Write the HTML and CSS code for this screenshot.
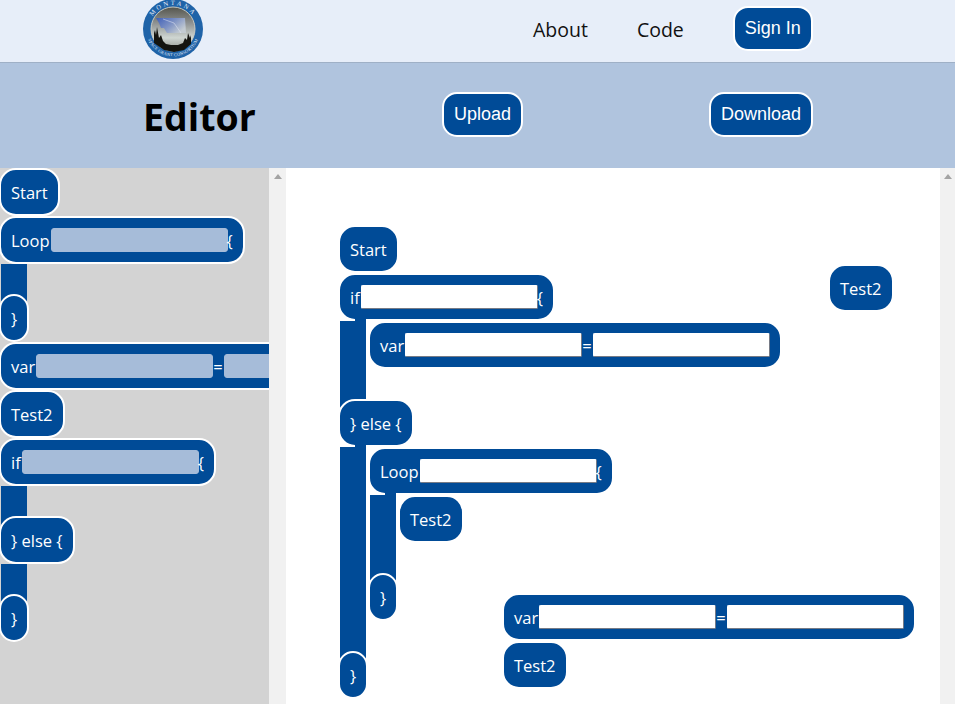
FILE: index.html
```html
<!DOCTYPE html>
<html lang="en">
<head>
    <meta charset="UTF-8">
    <meta name="viewport" content="width=device-width, initial-scale=1.0">
    <title>Editor</title>
    <link rel="stylesheet" href="styles.css">
</head>
<body>

    <nav class="navbar">
        <svg class="logo" viewBox="0 0 60 60" aria-label="Montana Space Grant Consortium">
            <defs>
                <path id="logo-top" d="M6 30a24 24 0 0 1 48 0"/>
                <path id="logo-bottom" d="M2.800 30a27.200 27.200 0 0 0 54.400 0"/>
                <linearGradient id="logo-sky" x1="0" y1="0" x2="0" y2="1">
                    <stop offset="0" stop-color="#55554c"/>
                    <stop offset="0.35" stop-color="#8b8f8f"/>
                    <stop offset="0.7" stop-color="#cfd6d2"/>
                    <stop offset="1" stop-color="#8d9088"/>
                </linearGradient>
                <linearGradient id="logo-state" x1="0" y1="0" x2="1" y2="0.600">
                    <stop offset="0" stop-color="#3f5fb8"/>
                    <stop offset="0.55" stop-color="#7f93c4"/>
                    <stop offset="1" stop-color="#c3cbd2"/>
                </linearGradient>
            </defs>
            <circle cx="30" cy="30" r="30" fill="#1f63a8"/>
            <circle cx="30" cy="30" r="22" fill="url(#logo-sky)" stroke="#c7c9c2" stroke-width="1"/>
            <path d="M13 19h29l1 15-19 0-3-5-3 0-2-5z" fill="url(#logo-state)"/>
            <path d="M20 20l11 4 7 10" fill="none" stroke="#e4e9f4" stroke-width="0.500"/>
            <path d="M11 44l0-10 1-3 1 5 1-8 2 11 2-3 2 6 3 3 5 1 7 0 5-2 2-5 2 2 1-7 2 5 1-3 0 9-7 6-10 2-10-2z" fill="#14140f"/>
            <text class="logo-text"><textPath href="#logo-top" startOffset="50%" text-anchor="middle">MONTANA</textPath></text>
            <text class="logo-text logo-text-small"><textPath href="#logo-bottom" startOffset="50%" text-anchor="middle">SPACE GRANT CONSORTIUM</textPath></text>
        </svg>
        <div class="nav-links">
            <a class="nav-link">About</a>
            <a class="nav-link">Code</a>
            <button class="btn">Sign In</button>
        </div>
    </nav>

    <header class="editor-header">
        <h1>Editor</h1>
        <button class="btn btn-upload">Upload</button>
        <button class="btn btn-download">Download</button>
    </header>

    <main class="workspace">
        <div class="palette">
            <div class="block">Start</div>
            <div class="block">Loop<input class="field" type="text" disabled>{</div>
            <div class="block-body"></div>
            <div class="block">}</div>
            <div class="block">var<input class="field" type="text" disabled><span class="equals">=</span><input class="field" type="text" disabled></div>
            <div class="block">Test2</div>
            <div class="block">if<input class="field" type="text" disabled>{</div>
            <div class="block-body"></div>
            <div class="block">} else {</div>
            <div class="block-body"></div>
            <div class="block">}</div>
        </div>
        <div class="scrollbar scrollbar-palette"><span class="scroll-arrow"></span></div>

        <div class="canvas">
            <div class="stack stack-main">
                <div class="block">Start</div>
                <div class="block">if<input class="field" type="text">{</div>
                <div class="block-body">
                    <div class="block">var<input class="field" type="text"><span class="equals">=</span><input class="field" type="text"></div>
                </div>
                <div class="block">} else {</div>
                <div class="block-body">
                    <div class="block">Loop<input class="field" type="text">{</div>
                    <div class="block-body">
                        <div class="block">Test2</div>
                    </div>
                    <div class="block">}</div>
                </div>
                <div class="block">}</div>
            </div>
            <div class="stack stack-loose">
                <div class="block">Test2</div>
            </div>
            <div class="stack stack-var">
                <div class="block">var<input class="field" type="text"><span class="equals">=</span><input class="field" type="text"></div>
                <div class="block">Test2</div>
            </div>
        </div>
        <div class="scrollbar"><span class="scroll-arrow"></span></div>
    </main>

</body>
</html>
```

FILE: styles.css
```css
* { margin: 0; padding: 0; box-sizing: border-box; }
body {
    background-color: #fff;
    font-family: "Open Sans", sans-serif;
    height: 704px;
    overflow: hidden;
}

/* top nav */
.navbar {
    height: 63px;
    background-color: #e7eef9;
    border-bottom: 1px solid #9fb0c6;
    display: flex;
    align-items: flex-start;
    padding-left: 143px;
}
.logo { width: 60px; height: 60px; margin-top: -1px; }
.logo-text { font-family: "Liberation Serif", serif; font-size: 6.500px; letter-spacing: 2.300px; fill: #e8eef8; }
.logo-text-small { font-size: 4.300px; letter-spacing: 0.250px; }
.nav-links {
    display: flex;
    align-items: center;
    margin-left: 330px;
    padding-top: 6px;
}
.nav-link {
    font-size: 19.500px;
    color: #111;
    margin: 2px 49px 0 0;
}
.btn {
    background-color: #004b97;
    color: #fff;
    border: 2px solid #fff;
    border-radius: 15px;
    font-family: "Liberation Sans", sans-serif;
    font-size: 18px;
    padding: 10px;
    line-height: 21px;
}

/* editor title bar */
.editor-header {
    height: 105px;
    background-color: #b0c4de;
    display: flex;
    align-items: center;
    padding: 0 0 2px 143px;
}
.editor-header h1 {
    font-size: 37.500px;
    font-weight: 700;
    color: #000;
    width: 299px;
    margin-top: 3px;
}
.btn-download { margin-left: 186px; }

/* palette + canvas */
.workspace {
    height: 536px;
    display: grid;
    grid-template-columns: 269px 17px 654px 15px;
}
.palette {
    background-color: #d3d3d3;
    overflow: hidden;
}
.palette .block { margin-left: -1px; }
.palette .block-body { margin-left: 1px; }
.palette .field { background-color: #a6bcd9; border-color: #a6bcd9; border-radius: 3px; }
.scrollbar {
    background-color: #f1f1f1;
    display: flex;
    justify-content: center;
    padding-top: 6px;
}
.scroll-arrow {
    width: 0;
    height: 0;
    border-left: 4px solid transparent;
    border-right: 4px solid transparent;
    border-bottom: 5px solid #a3a3a3;
}
.canvas { position: relative; overflow: hidden; }
.stack { position: absolute; }
.stack-main { left: 52px; top: 57px; }
.stack-loose { left: 542px; top: 96px; }
.stack-var { left: 216px; top: 425px; }

/* code blocks */
.block {
    position: relative;
    z-index: 1;
    display: flex;
    align-items: center;
    width: max-content;
    height: 48px;
    padding: 0 10px;
    background-color: #004b97;
    border: 2px solid #fff;
    border-radius: 17px;
    color: #fff;
    font-size: 16.500px;
    white-space: nowrap;
}
/* the bar down the left of a loop / if */
.block-body {
    position: relative;
    margin: 0 0 -16px 2px;
    padding: 0 0 46px 2px;
    border-left: 26px solid #004b97;
}
/* on the canvas the bar runs into the head block */
.canvas .block-body::before {
    content: "";
    position: absolute;
    z-index: 2;
    top: -2px;
    left: -11px;
    width: 11px;
    height: 2px;
    background-color: #004b97;
}
.field {
    width: 177px;
    height: 24px;
    background-color: #fff;
    border: 1px solid #fff;
    border-right-color: #767b86;
    border-bottom-color: #767b86;
    border-radius: 2px;
}
.field:first-of-type { margin: 0 -1px 0 1px; }
.equals { padding: 0 1px; }
```
